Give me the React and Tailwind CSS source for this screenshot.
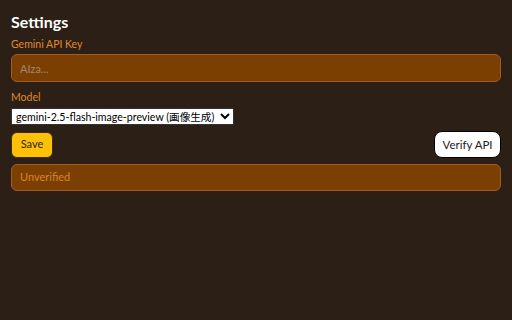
import React, { useState } from 'react';

export default function App() {
  const [apiKey, setApiKey] = useState('');
  const [model, setModel] = useState('gemini-2.5-flash-image-preview');

  return (
    <div
      className="w-[512px] h-[320px] bg-[#2c1f15] px-[11px] pt-[12px] text-white"
      style={{ fontFamily: 'Lato, "Noto Sans CJK JP", sans-serif' }}
    >
      <h1 className="text-[16px] font-bold leading-[20px]">Settings</h1>

      <label className="block mt-[5px] text-[10.5px] leading-[14px] text-[#e08a2e]">Gemini API Key</label>
      <input
        value={apiKey}
        onChange={(e) => setApiKey(e.target.value)}
        placeholder="AIza..."
        className="mt-[3px] block w-full h-[28px] px-[8px] rounded-md bg-[#7b4001] border border-[#a5582a] text-[11px] text-[#e0c0a0] placeholder:text-[#a08670] outline-none"
      />

      <label className="block mt-[8px] text-[10.5px] leading-[14px] text-[#e08a2e]">Model</label>
      <select
        value={model}
        onChange={(e) => setModel(e.target.value)}
        className="mt-[4px] block h-[17px] py-0 pl-0 pr-[2px] bg-white text-black border border-[#333] text-[10.6px] leading-[15px]"
      >
        <option value="gemini-2.5-flash-image-preview">gemini-2.5-flash-image-preview (画像生成)</option>
      </select>

      <div className="mt-[6px] flex items-center justify-between">
        <button className="w-[42px] h-[26px] rounded-md bg-[#fec107] border border-[#3a2a1a] text-[11px] text-[#2c1f15]">
          Save
        </button>
        <button className="w-[67px] h-[27px] rounded-lg bg-white border border-black text-[11.5px] text-[#222]">
          Verify API
        </button>
      </div>

      <div className="mt-[6px] h-[27px] flex items-center px-[8px] rounded-md bg-[#7b4001] border border-[#a5582a] text-[11px] text-[#d9822b]">
        Unverified
      </div>
    </div>
  );
}
